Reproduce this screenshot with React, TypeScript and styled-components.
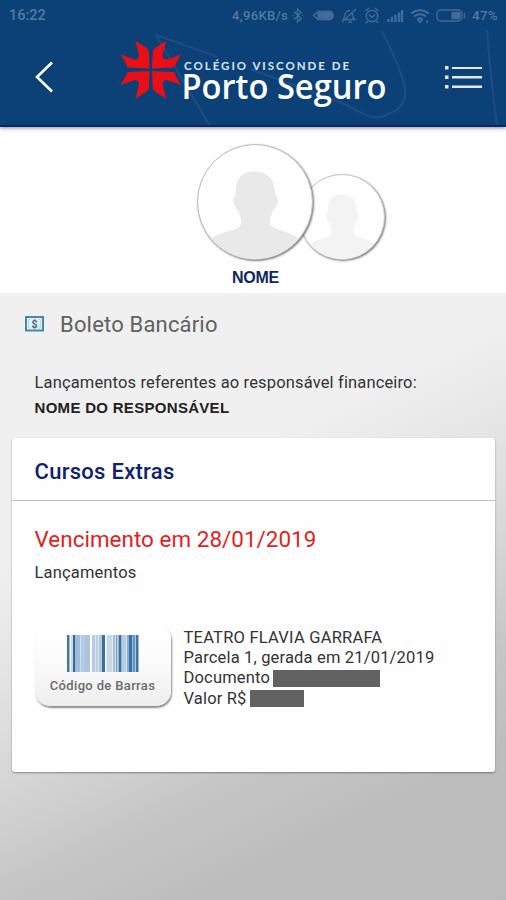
import React from "react";
import styled, { createGlobalStyle } from "styled-components";

const Global = createGlobalStyle`
  * { box-sizing: border-box; }
  body { margin: 0; background: #c4c4c4; font-family: Roboto, "Liberation Sans", sans-serif; }
`;

const Screen = styled.div`
  width: 506px;
  height: 900px;
  display: flex;
  flex-direction: column;
  overflow: hidden;
`;

const Header = styled.header`
  position: relative;
  z-index: 1;
  flex: 0 0 127px;
  display: flex;
  flex-direction: column;
  background: #0c4177;
  border-bottom: 2px solid #062a68;
  box-shadow: 0 1px 4px rgba(70, 35, 45, 0.55);
`;

const HeaderLines = styled.svg`
  position: absolute;
  left: 0;
  top: 0;
`;

const StatusBar = styled.div`
  position: relative;
  height: 30px;
  padding: 0 8px 0 9px;
  display: flex;
  align-items: center;
  justify-content: space-between;
  color: #5379a2;
`;

const StatusText = styled.span<{ $size: number; $tracking: number }>`
  font-size: ${(p) => p.$size}px;
  letter-spacing: ${(p) => p.$tracking}px;
  font-weight: 500;
  white-space: nowrap;
`;

const StatusGroup = styled.div`
  display: flex;
  align-items: center;
`;

const NavBar = styled.div`
  position: relative;
  flex: 1;
  display: flex;
  align-items: flex-start;
`;

const BackIcon = styled.svg`
  margin: 30px 0 0 34px;
`;

const Logo = styled.svg`
  margin: 7px 0 0 66px;
  overflow: visible;
`;

const MenuIcon = styled.svg`
  margin: 34px 0 0 53px;
`;

const Profile = styled.section`
  flex: 0 0 166px;
  background: #fefefe;
  display: flex;
  flex-direction: column;
`;

const Avatars = styled.div`
  display: flex;
  align-items: flex-end;
  height: 133px;
  padding-left: 197px;
`;

const Avatar = styled.div<{ $size: number; $front?: boolean }>`
  position: relative;
  z-index: ${(p) => (p.$front ? 1 : 0)};
  width: ${(p) => p.$size}px;
  height: ${(p) => p.$size}px;
  margin-left: ${(p) => (p.$front ? 0 : -14)}px;
  border: 1px solid ${(p) => (p.$front ? "#bcbcbc" : "#c6c6c6")};
  border-radius: 50%;
  overflow: hidden;
  background: #fefefe;
  box-shadow: 1px 1px 2px rgba(0, 0, 0, 0.5);
  svg { display: block; width: 100%; height: 100%; }
`;

const ProfileName = styled.div`
  margin: 6px 0 0 232px;
  font: 700 16px/24px "Liberation Sans", sans-serif;
  letter-spacing: -0.3px;
  color: #12265f;
`;

const Content = styled.main`
  flex: 1;
  padding: 0 11px 0 12px;
  background: linear-gradient(154deg, #f0f0f0 0, #f0f0f0 32%, #e6e6e6 43%, #d8d8d8 56%, #c6c6c6 70%, #bdbdbd 82%, #bbbbbb 100%);
`;

const PageTitle = styled.div`
  display: flex;
  height: 64px;
  align-items: center;
  padding-left: 12px;
`;

const Text = styled.div<{ $size: number; $line: number; $tracking?: number; $color?: string; $weight?: number }>`
  font-size: ${(p) => p.$size}px;
  line-height: ${(p) => p.$line}px;
  letter-spacing: ${(p) => p.$tracking ?? 0}px;
  color: ${(p) => p.$color ?? "#333333"};
  font-weight: ${(p) => p.$weight ?? 400};
  white-space: nowrap;
`;

const TitleText = styled(Text)`
  margin-left: 15px;
`;

const Responsible = styled.div`
  height: 81px;
  padding: 13px 0 0 22.5px;
`;

const ResponsibleName = styled(Text)`
  font-family: "Liberation Sans", sans-serif;
`;

const Card = styled.section`
  height: 334px;
  background: #fefefe;
  border-radius: 3px;
  box-shadow: 0 1px 2px rgba(0, 0, 0, 0.38);
`;

const CardHeader = styled.div`
  height: 63px;
  padding: 20px 0 0 22.5px;
  border-bottom: 1px solid #bdbdbd;
`;

const CardBody = styled.div`
  padding: 24px 0 0 22.5px;
`;

const Entry = styled.div`
  display: flex;
  margin-top: 32px;
`;

const BarcodeButton = styled.button`
  width: 136px;
  height: 82px;
  padding: 11px 0 0;
  border: 0;
  border-radius: 15px;
  display: flex;
  flex-direction: column;
  align-items: center;
  background: linear-gradient(#ffffff, #fcfcfc 40%, #eeeeee);
  box-shadow: 1px 2px 2px rgba(0, 0, 0, 0.45);
  font-family: inherit;
`;

const Details = styled.div`
  padding: 4px 0 0 13px;
`;

const DetailRow = styled.div`
  display: flex;
  align-items: center;
  height: 20.2px;
`;

const Redacted = styled.span<{ $width: number; $gap: number }>`
  width: ${(p) => p.$width}px;
  height: 16.5px;
  margin-left: ${(p) => p.$gap}px;
  background: #626262;
`;

function Person({ fill }: { fill: string }) {
  return (
    <svg viewBox="0 0 116 116">
      <path
        fill={fill}
        d="M57 27c-10 0-17 5-18 14l-1 11c-3 1-3 6 0 11l3 4c1 4 3 7 3 11 0 6-4 7-11 9-9 3-16 5-20 9v22h92V97c-6-5-12-7-20-10-7-2-12-4-12-9 0-4 2-7 3-11l3-4c3-5 3-9 0-11l-2-11c-1-8-9-14-20-14z"
      />
    </svg>
  );
}

const bars: [number, number, string][] = [
  [0, 2.5, "#3d78aa"], [4.5, 1, "#9cb9d5"], [6, 2.5, "#2f6c9f"], [8.5, 5, "#a2bddb"], [14, 4, "#b5cce4"],
  [18, 5, "#adc4dc"], [25, 3.5, "#b5cbe0"], [29, 2.5, "#bdd0e2"], [32, 3, "#b0c8e0"], [35, 3, "#35709f"],
  [39.5, 6, "#cad7e5"], [46, 2.5, "#a9bfd6"], [49, 1.5, "#7ca1c6"], [51.5, 3, "#3772a5"], [55, 4.5, "#b9cde1"],
  [60, 2, "#8daccd"], [62, 3.5, "#3871a6"], [66, 2.5, "#6994be"], [69, 2.5, "#3f76a7"],
];

function Barcode() {
  return (
    <svg width="72" height="37" viewBox="0 0 72 37">
      {bars.map(([x, w, c]) => (
        <rect key={x} x={x} width={w} height="37" fill={c} />
      ))}
    </svg>
  );
}

const StatusSvg = styled.svg`
  margin-left: 2px;
`;

function StatusIcons() {
  return (
    <StatusSvg width="182" height="24" viewBox="0 0 182 24" fill="none" stroke="#426b98" strokeWidth="1.400">
      <path d="M4 8.500l7 7-3.500 3.500V6L11 9.500l-7 7M2.500 12.500h1M12 12.500h1" />
      <path d="M28 8.500h10v8H28l-4.500-4z" />
      <path d="M28 10h8v5h-8z" fill="#426b98" />
      <circle cx="39" cy="12.500" r="4.300" fill="#426b98" />
      <path d="M53 16.500c3-2 0-9 7-9M62 9.500c1 3 0 5 3 7H55M52 19L66 6M58 19h4" />
      <circle cx="82" cy="13" r="5.800" />
      <path d="M75.500 8l3.500-3M88.500 8L85 5M79 11.500l3 3 3-3M77.500 18l-1.500 2M86.500 18l1.500 2" />
      <path d="M98.500 19v-3M102 19v-5M105.500 19v-7M109 19V9.500M112 19V7" strokeWidth="2.400" />
      <path d="M121 10.500c6-4.500 12-4.500 18 0M124 13.500c4-3 8-3 12 0M127 16.500c2-1.500 4-1.500 6 0" strokeWidth="2" />
      <path d="M128.500 18h3l-1.500 1.500zM137 17v3" />
      <rect x="147" y="7" width="25" height="11" rx="4" />
      <rect x="162" y="9.500" width="8" height="6" rx="1" fill="#426b98" />
      <path d="M174.500 10v5" />
    </StatusSvg>
  );
}

const ray = "M-15.500-29L-4.500-22-2-19-1.200-1.200-23-2.300-30-15.300-15.500-10-12.700-11.300-11.800-14.500z";

function BrandLogo() {
  return (
    <Logo width="272" height="76" viewBox="0 0 272 76" fill="#fff">
      <g fill="#e80f18" transform="translate(30.800 32.800)">
        <path d={ray} />
        <path d={ray} transform="scale(-1 1)" />
        <path d={ray} transform="scale(1 -1)" />
        <path d={ray} transform="scale(-1 -1)" />
      </g>
      <text x="64" y="33" fontFamily="Lato, sans-serif" fontWeight="700" fontSize="11.500" textLength="165" fill="#d9e6f5">COLÉGIO VISCONDE DE</text>
      <text x="61.500" y="62" fontFamily="'Open Sans', sans-serif" fontWeight="600" fontSize="35" textLength="205" lengthAdjust="spacingAndGlyphs">Porto Seguro</text>
    </Logo>
  );
}

export default function App() {
  return (
    <>
      <Global />
      <Screen>
        <Header>
          <HeaderLines width="506" height="125" fill="none" stroke="#1d4c82" strokeWidth="2.200">
            <path d="M210 126L156 35l62 22M250 69l92 34 24 12q14 5 22-1 22-8 16-30-4-17-22-53M487 30q3 40 10 96" />
          </HeaderLines>
          <StatusBar>
            <StatusText $size={14.5} $tracking={0}>16:22</StatusText>
            <StatusGroup>
              <StatusText $size={13} $tracking={0.35}>4,96KB/s</StatusText>
              <StatusIcons />
              <StatusText $size={13.5} $tracking={0.2}>47%</StatusText>
            </StatusGroup>
          </StatusBar>
          <NavBar>
            <BackIcon width="20" height="34" fill="none" stroke="#fff" strokeWidth="2.600">
              <path d="M18 2.500L3 17l15 14.500" />
            </BackIcon>
            <BrandLogo />
            <MenuIcon width="38" height="28" fill="#e3e8f2">
              <path d="M0 2h3.500v3.500H0zM0 11.500h3.500V15H0zM0 21h3.500v3.500H0zM7 3h30v2H7zM7 12h30v2.500H7zM7 21.500h30V24H7z" />
            </MenuIcon>
          </NavBar>
        </Header>
        <Profile>
          <Avatars>
            <Avatar $size={116} $front><Person fill="#e9e9e9" /></Avatar>
            <Avatar $size={86}><Person fill="#f3f3f3" /></Avatar>
          </Avatars>
          <ProfileName>NOME</ProfileName>
        </Profile>
        <Content>
          <PageTitle>
            <svg width="21" height="20" viewBox="0 0 21 20">
              <rect x="2" y="2" width="17" height="13.500" fill="#e4f2fa" stroke="#4a85aa" strokeWidth="2" />
              <path d="M6.500 4.500h-2v8.500h2M14.500 4.500h2v8.500h-2" fill="none" stroke="#b9d6e6" />
              <text x="10.500" y="12.500" textAnchor="middle" fontFamily="Roboto" fontSize="10.500" fontWeight="700" fill="#35657f">$</text>
            </svg>
            <TitleText $size={22} $line={30} $tracking={0.18} $color="#616161">Boleto Bancário</TitleText>
          </PageTitle>
          <Responsible>
            <Text $size={16.5} $line={25} $tracking={0.15}>Lançamentos referentes ao responsável financeiro:</Text>
            <ResponsibleName $size={15} $line={25} $tracking={0.3} $weight={700} $color="#222">NOME DO RESPONSÁVEL</ResponsibleName>
          </Responsible>
          <Card>
            <CardHeader>
              <Text $size={22} $line={28} $tracking={0.28} $weight={500} $color="#10216b">Cursos Extras</Text>
            </CardHeader>
            <CardBody>
              <Text $size={22.4} $line={28} $tracking={0.05} $color="#e21e22">Vencimento em 28/01/2019</Text>
              <Text $size={16.5} $line={39} $tracking={0.17}>Lançamentos</Text>
              <Entry>
                <BarcodeButton>
                  <Barcode />
                  <Text $size={13} $line={28} $tracking={0.35} $weight={500} $color="#6b6b6b">Código de Barras</Text>
                </BarcodeButton>
                <Details>
                  <DetailRow><Text $size={16.5} $line={20} $tracking={0.22}>TEATRO FLAVIA GARRAFA</Text></DetailRow>
                  <DetailRow><Text $size={16.5} $line={20} $tracking={0.17}>Parcela 1, gerada em 21/01/2019</Text></DetailRow>
                  <DetailRow><Text $size={16.5} $line={20} $tracking={0.17}>Documento</Text><Redacted $width={107} $gap={3} /></DetailRow>
                  <DetailRow><Text $size={16.5} $line={20} $tracking={0.17}>Valor R$</Text><Redacted $width={54} $gap={3} /></DetailRow>
                </Details>
              </Entry>
            </CardBody>
          </Card>
        </Content>
      </Screen>
    </>
  );
}
